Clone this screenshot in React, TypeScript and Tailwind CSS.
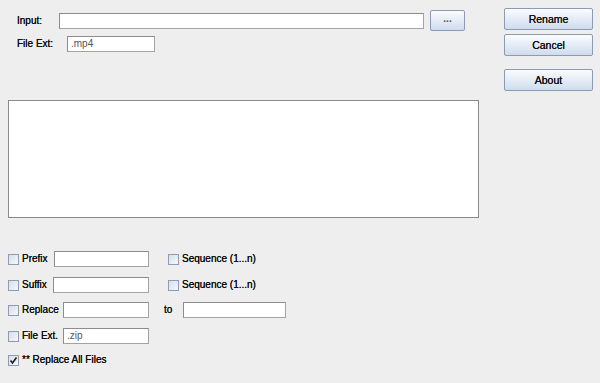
import React from "react";

const font = { fontFamily: '"Liberation Sans", Arial, sans-serif' };

function Field({ w, value = "" }: { w: string; value?: string }) {
  return (
    <div
      className={`${w} h-[16px] shrink-0 bg-white border border-[#a3a3a3] border-t-[#8c8c8c] border-l-[#8c8c8c] flex items-center pl-[3px] text-[10px] text-[#555] leading-none`}
    >
      {value}
    </div>
  );
}

function Button({ label, className = "" }: { label: string; className?: string }) {
  return (
    <button
      className={`h-[22px] w-[89px] rounded-[2px] border border-[#8b9bb3] bg-gradient-to-b from-[#fbfcfe] to-[#cfdcee] text-[10.5px] text-[#111] leading-none [text-shadow:0_0_0.5px_#000] ${className}`}
    >
      {label}
    </button>
  );
}

function Check({ checked = false }: { checked?: boolean }) {
  return (
    <div className="w-[11px] h-[11px] shrink-0 border border-[#8d9cb4] bg-gradient-to-br from-[#d8dee8] to-[#f6f7f9] flex items-center justify-center">
      {checked && (
        <svg width="9" height="9" viewBox="0 0 9 9">
          <path d="M1.5 4.5 L3.5 7 L7.5 1.5" fill="none" stroke="#1d1d1d" strokeWidth="1.6" />
        </svg>
      )}
    </div>
  );
}

function Label({ children, className = "" }: { children: React.ReactNode; className?: string }) {
  return (
    <span
      className={`text-[10px] text-[#111] leading-none whitespace-nowrap shrink-0 [text-shadow:0_0_0.5px_#000] ${className}`}
    >
      {children}
    </span>
  );
}

export default function App() {
  return (
    <div className="w-[600px] h-[383px] bg-[#eeeeee] flex overflow-hidden" style={font}>
      <div className="w-[504px] flex flex-col">
        <div className="mt-[10px] h-[21px] flex items-center">
          <Label className="ml-[17px] w-[42px]">Input:</Label>
          <Field w="w-[365px]" />
          <button className="ml-[6px] h-[21px] w-[35px] rounded-[2px] border border-[#8b9bb3] bg-gradient-to-b from-[#fbfcfe] to-[#cfdcee] text-[10px] font-bold text-[#555] leading-none pb-[3px]">
            ...
          </button>
        </div>
        <div className="mt-[5px] h-[16px] flex items-center">
          <Label className="ml-[17px] w-[50px]">File Ext:</Label>
          <Field w="w-[88px]" value=".mp4" />
        </div>
        <div className="mt-[48px] ml-[8px] w-[471px] h-[118px] bg-white border border-[#8a8a8a]" />

        <div className="mt-[33px] ml-[8px] flex flex-col">
          <div className="h-[16px] flex items-center">
            <Check />
            <Label className="ml-[3px] w-[32px]">Prefix</Label>
            <Field w="w-[95px]" />
            <div className="ml-[19px]">
              <Check />
            </div>
            <Label className="ml-[3px]">Sequence (1...n)</Label>
          </div>
          <div className="mt-[10px] h-[16px] flex items-center">
            <Check />
            <Label className="ml-[3px] w-[31px]">Suffix</Label>
            <Field w="w-[96px]" />
            <div className="ml-[19px]">
              <Check />
            </div>
            <Label className="ml-[3px]">Sequence (1...n)</Label>
          </div>
          <div className="mt-[9px] h-[16px] flex items-center">
            <Check />
            <Label className="ml-[3px] w-[41px]">Replace</Label>
            <Field w="w-[86px]" />
            <Label className="ml-[15px] w-[19px]">to</Label>
            <Field w="w-[103px]" />
          </div>
          <div className="mt-[10px] h-[16px] flex items-center">
            <Check />
            <Label className="ml-[3px] w-[41px]">File Ext.</Label>
            <Field w="w-[86px]" value=".zip" />
          </div>
          <div className="mt-[9px] h-[14px] flex items-center">
            <Check checked />
            <Label className="ml-[3px]">** Replace All Files</Label>
          </div>
        </div>
      </div>

      <div className="pt-[8px] flex flex-col">
        <Button label="Rename" />
        <Button label="Cancel" className="mt-[4px]" />
        <Button label="About" className="mt-[13px]" />
      </div>
    </div>
  );
}
